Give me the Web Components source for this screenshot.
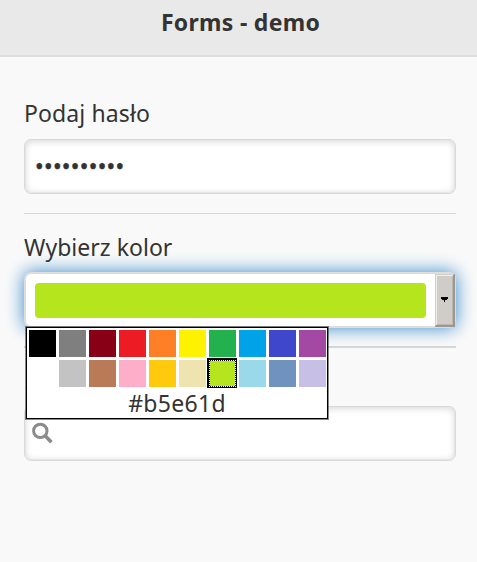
<!DOCTYPE html>
<html lang="pl"><head><meta charset="utf-8"><title>Forms - demo</title>
<style>
html,body{margin:0;height:562px;overflow:hidden;background:#f9f9f9;color:#333;font:23px/30px "Noto Sans","Open Sans",sans-serif}
</style></head><body>
<forms-page>
<page-header slot="header">Forms - demo</page-header>
<form-field label="Podaj hasło" style="--ls:.12px;--lh:28px;--h:133px"><password-box value="••••••••••"></password-box></form-field>
<form-field label="Wybierz kolor" style="--ls:.03px;--rule:2px"><color-box value="#b5e61d"></color-box></form-field>
<form-field label="Szukaj" style="--indent:1px;--rule:0px"><search-box></search-box></form-field>
</forms-page>
<script>
const define=(name,html,init)=>customElements.define(name,class extends HTMLElement{
  constructor(){super();this.attachShadow({mode:'open'}).innerHTML=html;}
  connectedCallback(){if(init)init(this,this.shadowRoot);}
});
const box=`box-sizing:border-box;height:55px;border:1px solid #d9d9d9;border-radius:7px;background:#fff;box-shadow:inset 0 0 0 1px #e6e6e6,inset 0 1px 6px 1px rgba(0,0,0,.14)`;

define('forms-page',`<style>
:host{display:block;height:562px}
main{padding:42px 21px 0 24px;display:flex;flex-direction:column}
</style><slot name="header"></slot><main><slot></slot></main>`);

define('page-header',`<style>
:host{display:block;box-sizing:border-box;height:57px;padding:7px 0 0 4px;background:#e9e9e9;border-bottom:2px solid #ddd}
h1{margin:0;font-size:23px;line-height:30px;font-weight:700;text-align:center;letter-spacing:.3px}
</style><h1><slot></slot></h1>`);

define('form-field',`<style>
:host{display:block;box-sizing:border-box;height:var(--h,134px)}
label{display:block;height:40px;line-height:var(--lh,30px);letter-spacing:var(--ls,0);text-indent:var(--indent,0)}
.rule{box-sizing:border-box;height:20px;border-bottom:var(--rule,1px) solid #d6d6d6}
</style><label></label><slot></slot><div class="rule"></div>`,(el,r)=>{r.querySelector('label').textContent=el.getAttribute('label');});

define('password-box',`<style>
:host{display:flex;align-items:center;padding-left:10px;${box}}
span{line-height:30px;font-size:23px;letter-spacing:.3px;-webkit-text-stroke:.5px #333;padding-bottom:1px}
</style><span></span>`,(el,r)=>{r.querySelector('span').textContent=el.getAttribute('value');});

define('search-box',`<style>
:host{display:flex;padding:15px 0 0 7px;${box}}
svg{width:23px;height:23px}
</style><svg viewBox="0 0 23 23" fill="none" stroke="#8b8b8b"><circle cx="8.3" cy="8.9" r="6.7" stroke-width="3"/><path d="M13.2 13.7L19.4 20.3" stroke-width="3.6"/></svg>`);

define('color-swatch',`<style>
:host{display:block;position:relative;width:27px;height:27px;background:var(--c)}
:host([selected])::before{content:"";position:absolute;inset:-2px -1px -1px -2px;border:solid #000;border-width:3px 2px 2px 3px}
:host([selected])::after{content:"";position:absolute;inset:0;border:1px dotted #fff}
</style>`,(el)=>el.style.setProperty('--c',el.getAttribute('color')));

define('color-palette',`<style>
:host{display:block;box-sizing:border-box;width:302px;height:92px;border:1px solid #000;background:#fff;box-shadow:0 0 0 1px rgba(0,0,0,.45);padding:2px}
.grid{display:grid;grid-template-columns:repeat(10,27px);gap:3px}
.code{text-align:center;height:30px;line-height:30px;padding-top:1px;letter-spacing:.3px}
</style><div class="grid"></div><div class="code"></div>`,(el,r)=>{
 const v=el.getAttribute('value');
 r.querySelector('.grid').innerHTML='#000000 #7f7f7f #880015 #ed1c24 #ff7f27 #fff200 #22b14c #00a2e8 #3f48cc #a349a4 #ffffff #c3c3c3 #b97a57 #ffaec9 #ffc90e #efe4b0 #b5e61d #99d9ea #7092be #c8bfe7'.split(' ').map(c=>`<color-swatch color="${c}"${c===v?' selected':''}></color-swatch>`).join('');
 r.querySelector('.code').textContent=v;
});

define('color-box',`<style>
:host{display:flex;position:relative;${box};height:56px;border:2px solid #ddd;box-shadow:0 0 18px #3388cc}
.value{flex:1;margin:9px 9px 8px 8.5px;border-radius:4px;background:var(--v)}
button{box-sizing:border-box;width:20px;height:53px;margin-right:-1px;padding:0 1px 6px 0;border:solid;border-width:1px 2px 2px 1px;border-color:#d4d0c8 #9c9690 #9c9690 #d4d0c8;background:#d0ccc7;box-shadow:inset 1px 1px #f1eeea,inset -1px -1px #bdb8b2;display:flex;align-items:center;justify-content:center}
button svg{width:7px;height:5px;position:relative;top:2px}
color-palette{position:absolute;left:0;top:53px;z-index:2}
</style><div class="value"></div><button><svg viewBox="0 0 7 5" shape-rendering="crispEdges"><path d="M0 0h7v2H6v1H4v2H3V3H1V2H0z"/></svg></button>`,(el,r)=>{
 const v=el.getAttribute('value');el.style.setProperty('--v',v);
 const p=document.createElement('color-palette');p.setAttribute('value',v);r.append(p);
});
</script></body></html>
